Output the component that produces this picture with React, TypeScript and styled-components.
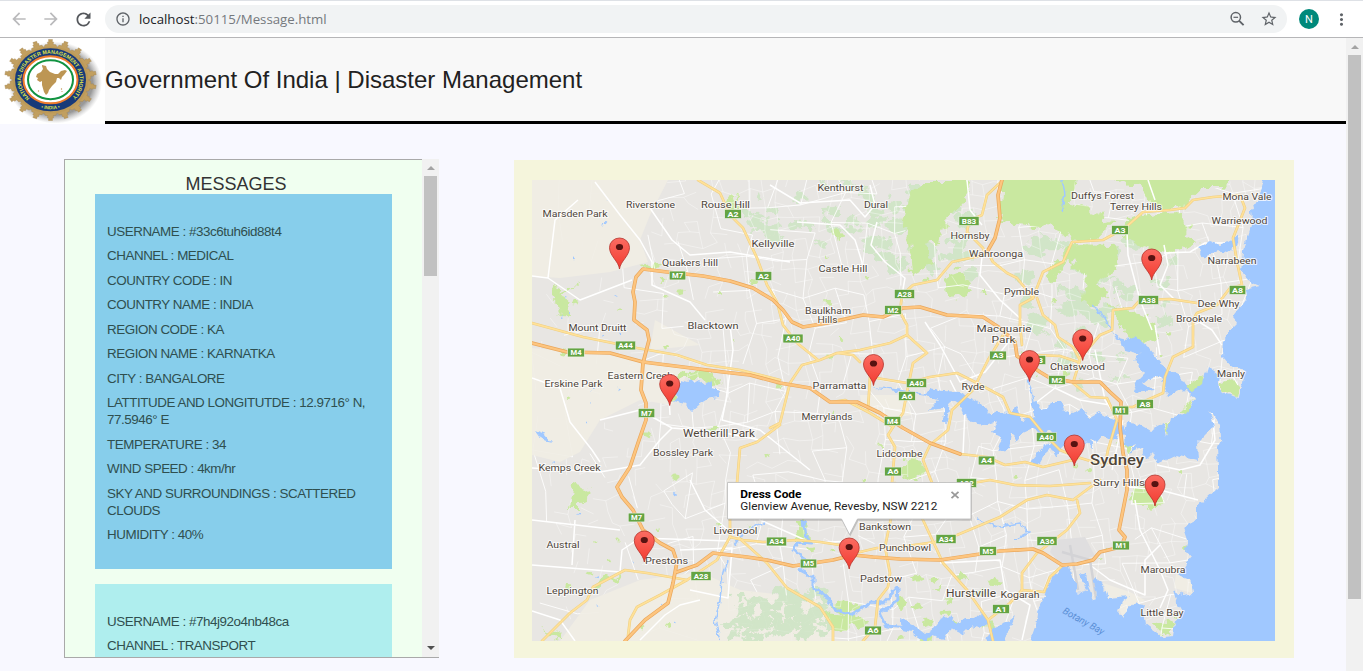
import React from "react";
import styled, { createGlobalStyle } from "styled-components";
import {
  MdArrowBack,
  MdArrowForward,
  MdRefresh,
  MdInfoOutline,
  MdStarBorder,
  MdMoreVert,
} from "react-icons/md";

const GlobalStyle = createGlobalStyle`
  *, *::before, *::after { box-sizing: border-box; }
  html, body { margin: 0; padding: 0; }
  body {
    background: #f8f8ff;
    font-family: "Liberation Sans", Arial, sans-serif;
    color: #222;
    overflow: hidden;
  }
`;

const Window = styled.div`
  display: flex;
  flex-direction: column;
  width: 1363px;
  height: 671px;
  overflow: hidden;
`;

/* ---------- Browser toolbar ---------- */

const Toolbar = styled.div`
  display: flex;
  align-items: center;
  flex: none;
  height: 38px;
  background: #fff;
  border-top: 1px solid #dee1e6;
  border-bottom: 1px solid #b6b6b8;
`;

const NavButton = styled.span<{ $muted?: boolean }>`
  display: flex;
  align-items: center;
  justify-content: center;
  width: 32px;
  height: 28px;
  color: ${(p) => (p.$muted ? "#bababc" : "#55585c")};
`;

const NavGroup = styled.div`
  display: flex;
  padding-left: 3px;
  width: 105px;
`;

const AddressBar = styled.div`
  display: flex;
  align-items: center;
  width: 1182px;
  height: 28px;
  padding: 0 9px 0 10px;
  border-radius: 14px;
  background: #f1f3f4;
  color: #5f6368;
`;

const Url = styled.span`
  flex: 1;
  margin-left: 8px;
  font-family: "Open Sans", "Noto Sans", sans-serif;
  font-size: 13.25px;
  color: #75797e;
  b {
    font-weight: 400;
    color: #202124;
  }
`;

const AddressAction = styled.span`
  display: flex;
  margin-left: 14px;
`;

const Avatar = styled.span`
  display: flex;
  align-items: center;
  justify-content: center;
  width: 20px;
  height: 20px;
  margin: 0 13px 0 12px;
  border-radius: 50%;
  background: #00897b;
  color: #fff;
  font: 11px Roboto, sans-serif;
`;

const ZoomOutIcon = () => (
  <svg width="18" height="18" viewBox="0 0 18 18" fill="none" stroke="currentColor">
    <circle cx="7.8" cy="7.3" r="4.7" strokeWidth="1.5" />
    <path d="M11.2,10.8 L15.6,15.2" strokeWidth="1.9" />
    <path d="M5.5,7.3 H10.1" strokeWidth="1.2" />
  </svg>
);

/* ---------- Page ---------- */

const Viewport = styled.div`
  display: flex;
  flex: 1;
  min-height: 0;
`;

const Page = styled.div`
  display: flex;
  flex-direction: column;
  width: 1346px;
`;

const Scrollbar = styled.div<{ $thumb: number }>`
  display: flex;
  flex-direction: column;
  align-items: center;
  flex: none;
  width: 17px;
  background: #f1f1f1;
  &::after {
    content: "";
    order: 1;
    width: 13px;
    height: ${(p) => p.$thumb}px;
    background: #c1c1c1;
  }
`;

const ArrowUp = styled.span`
  height: 17px;
  padding-top: 7px;
  &::before {
    content: "";
    display: block;
    border: 4px solid transparent;
    border-top: 0;
    border-bottom-color: #a3a3a3;
  }
`;

const ArrowDown = styled.span`
  order: 2;
  height: 17px;
  margin-top: auto;
  padding-top: 6px;
  &::before {
    content: "";
    display: block;
    border: 4px solid transparent;
    border-bottom: 0;
    border-top-color: #505050;
  }
`;

const Header = styled.header`
  display: flex;
  flex: none;
  height: 86px;
`;

const LogoBox = styled.div`
  width: 105px;
  background: #fff;
`;

const Banner = styled.div`
  display: flex;
  align-items: center;
  flex: 1;
  background: #f8f8f8;
  border-bottom: 3px solid #000;
`;

const Title = styled.h1`
  margin: 0;
  font-size: 24px;
  font-weight: 400;
  color: #212121;
`;

const Main = styled.main`
  display: flex;
  align-items: flex-start;
  gap: 75px;
  padding: 35px 0 0 64px;
`;

const MessagePanel = styled.section`
  display: flex;
  width: 375px;
  height: 499px;
  border-bottom: 1px solid #a9a9a9;
`;

const MessageList = styled.div`
  display: flex;
  flex-direction: column;
  flex: 1;
  gap: 15px;
  padding: 0 30px;
  overflow: hidden;
  background: #f0fff0;
  border: 1px solid #a9a9a9;
  border-right: 0;
  border-bottom: 0;
`;

const PanelTitle = styled.h2`
  flex: none;
  height: 34px;
  margin: 0 15px -15px 0;
  padding-top: 13px;
  font-size: 18px;
  line-height: 22px;
  font-weight: 400;
  text-align: center;
  color: #333;
`;

const MessageCard = styled.article<{ $tone: string }>`
  flex: none;
  width: 297px;
  height: 375px;
  padding: 28.8px 12px 0;
  background: ${(p) => p.$tone};
`;

const Field = styled.p`
  margin: 0 0 7.4px;
  font-size: 13.4px;
  line-height: 17.1px;
  letter-spacing: -0.45px;
  color: #2f4f4f;
`;

const MapFrame = styled.section`
  width: 780px;
  height: 498px;
  margin-top: 1px;
  padding: 20px 19px 17px 18px;
  background: #f5f5dc;
  svg {
    display: block;
  }
`;

/* ---------- Emblem ---------- */

const teeth = Array.from({ length: 18 }, (_, i) => i * 20);

const Emblem = () => (
  <svg width="105" height="86" viewBox="0 0 105 86">
    <defs>
      <radialGradient id="shade">
        <stop offset="0.8" stopColor="#777" stopOpacity="0.75" />
        <stop offset="1" stopColor="#999" stopOpacity="0" />
      </radialGradient>
      <path id="arcTop" d="M29.8,60.2 A29.3,26 0 1 1 69.5,61.5" />
      <path id="arcLow" d="M32,66.5 A34,30 0 0 0 69,66.5" />
    </defs>
    <ellipse cx="55" cy="44.5" rx="47" ry="41" fill="url(#shade)" />
    <g transform="translate(50.5 42) scale(1 .88)">
      {teeth.map((a) => (
        <path
          key={a}
          transform={`rotate(${a})`}
          fill="#c19f60"
          stroke="#a08350"
          strokeWidth=".4"
          d="M-7.5,-34 L-5.5,-40 L-2.6,-40.5 L-3.2,-43 L-1.8,-43.5 L-2,-46 L2,-46 L1.8,-43.5 L3.2,-43 L2.6,-40.5 L5.5,-40 L7.5,-34Z"
        />
      ))}
      <circle r="38" fill="#bd9a58" />
    </g>
    <ellipse cx="50.5" cy="41.8" rx="35.5" ry="31.5" fill="#173a79" />
    <ellipse cx="50.5" cy="41.8" rx="27" ry="23.5" fill="#fff" stroke="#ef7c2c" strokeWidth="2" />
    <ellipse cx="50.5" cy="41.8" rx="22.5" ry="19.5" fill="#fff" stroke="#119341" strokeWidth="2" />
    <path
      d="M42,27 l4,1 1,3 3,3 5,2 3,0 3,-3 4,-1 2,1 -3,4 -2,2 -1,3 -2,-2 -2,0 -1,4 -4,4 -3,4 -1,3 -2,2 -2,-3 -2,-7 0,-4 -2,1 -3,-2 1,-2 -2,-1 1,-3 4,-2 2,-3 -1,-3z"
      fill="#bd9654"
    />
    <g fill="#bd9654">
      <circle cx="38.5" cy="53" r=".7" />
      <circle cx="61.5" cy="51" r=".7" />
      <circle cx="62" cy="53.5" r=".6" />
    </g>
    <g fontFamily="Liberation Sans, Arial, sans-serif" fontWeight="700" fill="#dfe04a">
      <text fontSize="5.4">
        <textPath href="#arcTop" textLength="127" lengthAdjust="spacingAndGlyphs">
          NATIONAL DISASTER MANAGEMENT AUTHORITY
        </textPath>
      </text>
      <text fontSize="4.8">
        <textPath href="#arcLow" startOffset="50%" textAnchor="middle">
          • INDIA •
        </textPath>
      </text>
    </g>
  </svg>
);

/* ---------- Map ---------- */

const WATER = "#a0c8ff";
const PARK = "#c9e8a0";
const WOOD = "#d1e5c8";
const RURAL = "#f0ede4";
const LAND = "#e8e6e3";

let seed = 11;
const rand = () => {
  seed = (seed * 16807) % 2147483647;
  return seed / 2147483647;
};

const buildStreets = (step: number, keep: number) => {
  const cols = Math.ceil(743 / step) + 2;
  const rows = Math.ceil(461 / step) + 2;
  const pts: number[][][] = [];
  for (let r = 0; r < rows; r++) {
    pts.push([]);
    for (let c = 0; c < cols; c++) {
      const x = 526 + c * step + (rand() - 0.5) * step * 0.6 + r * 1.2;
      const y = 174 + r * step + (rand() - 0.5) * step * 0.6 - c * 0.5;
      pts[r].push([x, y]);
    }
  }
  let d = "";
  for (let r = 0; r < rows; r++) {
    for (let c = 0; c < cols; c++) {
      const [x, y] = pts[r][c];
      const k = x < 650 ? keep * 0.4 : keep;
      if (c + 1 < cols && rand() < k) {
        const [a, b] = pts[r][c + 1];
        d += `M${x.toFixed(1)},${y.toFixed(1)}L${a.toFixed(1)},${b.toFixed(1)}`;
      }
      if (r + 1 < rows && rand() < k) {
        const [a, b] = pts[r + 1][c];
        d += `M${x.toFixed(1)},${y.toFixed(1)}L${a.toFixed(1)},${b.toFixed(1)}`;
      }
    }
  }
  return d;
};

const sideStreets = buildStreets(13, 0.5);
const mainStreets = buildStreets(31, 0.62);

const blob = (cx: number, cy: number, size: number) => {
  const n = 9;
  let s = "";
  for (let i = 0; i < n; i++) {
    const t = (i / n) * Math.PI * 2;
    const q = size * (0.45 + rand() * 0.8);
    s += `${(cx + Math.cos(t) * q).toFixed(1)},${(cy + Math.sin(t) * q * 0.75).toFixed(1)} `;
  }
  return s;
};

const scatter = (n: number, x0: number, y0: number, x1: number, y1: number, lo: number, hi: number) =>
  Array.from({ length: n }, () =>
    blob(x0 + rand() * (x1 - x0), y0 + rand() * (y1 - y0), lo + rand() * (hi - lo))
  );

const woods = [
  ...scatter(34, 745, 180, 920, 245, 4, 11),
  ...scatter(30, 880, 185, 970, 290, 5, 13),
  ...scatter(30, 1020, 235, 1180, 330, 6, 14),
  ...scatter(80, 730, 590, 826, 640, 4, 10),
  ...scatter(14, 1060, 330, 1130, 400, 3, 8),
];
const cityParks = [
  ...scatter(46, 650, 250, 1200, 560, 1.5, 4.5),
  ...scatter(16, 560, 270, 700, 640, 2, 4),
  ...scatter(18, 860, 570, 1000, 640, 3, 7),
];
const ponds = scatter(22, 540, 190, 680, 640, 0.8, 1.8);

const rural = [
  "532,180 668,180 650,215 640,240 648,262 610,272 560,278 532,276",
  "532,348 600,354 690,368 672,405 640,400 600,420 580,452 560,462 532,455",
  "590,600 640,580 700,572 740,590 825,600 835,641 560,641",
  "655,320 700,345 650,350",
  "860,395 905,395 912,415 890,418 862,408",
  "1176,574 1193,580 1192,593 1174,588",
  "1103,583 1130,592 1145,600 1122,616 1118,606 1126,597 1108,598",
];

const parks = [
  "920,180 967,180 972,192 963,202 945,222 940,242 922,245 930,256 933,265 912,276 910,242 902,222 908,200",
  "1003,176 1076,176 1070,203 1098,213 1114,224 1098,237 1074,240 1058,230 1035,226 1000,222",
  "1100,176 1236,176 1224,188 1204,188 1186,205 1160,210 1148,198 1140,187",
  "1130,217 1160,214 1183,213 1187,235 1200,243 1173,252 1137,245 1124,235",
  "1073,244 1112,245 1115,268 1097,282 1110,298 1082,305 1087,275 1065,260 1052,285 1048,275 1060,255",
  "1110,305 1142,315 1155,322 1157,338 1140,345 1126,335",
  "549,285 563,288 573,318 561,317",
  "572,483 585,487 593,493 580,503 580,510 568,510",
  "594,583 622,573 618,580 600,587",
  "551,302 576,284 570,292 556,304",
  "902,460 920,455 925,475 912,480 902,475",
  "944,278 960,272 970,285 962,300 948,296",
  "796,520 806,520 808,540 798,540",
  "833,606 850,600 862,604 852,613 838,614",
  "822,613 858,616 870,622 845,630 828,625",
  "1128,492 1150,480 1163,500 1150,508 1130,502",
  "1152,625 1175,620 1173,636 1156,632",
  "726,200 738,198 738,210 728,212",
  "672,386 680,374 700,372 720,378 716,386 700,378 686,378",
  "640,265 655,262 662,268 648,270",
  "830,230 838,228 842,238 834,240",
  "555,637 542,628 556,632 562,641",
];

const coast =
  "M1264,170 L1264,180 1260,195 1257,202 1251,210 1252,222 1247,238 1244,252 1242,272 1248,280 1260,285 1246,288 1247,298 1240,308 1233,317 1238,323 1231,330 1223,340 1222,357 1230,366 1245,371 1243,382 1239,397 1226,394 1218,388 1220,376 1207,367 1204,378 1190,388 1186,382 1176,377 1168,370 1166,382 1172,392 1187,390 1195,400 1183,415 1170,418 1166,437 1163,423 1150,430 1140,424 1127,423 1124,437 1125,447 1136,444 1130,453 1143,447 1145,460 1153,452 1157,464 1177,455 1198,460 1197,443 1207,433 1214,427 1210,410 1220,425 1221,437 1217,447 1218,470 1218,488 1205,500 1198,505 1198,520 1183,528 1187,540 1186,552 1191,558 1185,568 1177,575 1190,580 1193,593 1183,595 1173,590 1177,603 1183,613 1175,623 1173,636 1163,637 1153,630 1145,624 1143,613 1145,603 1135,602 1122,617 1118,612 1122,602 1130,596 1108,598 1103,583 1093,577 1098,600 1093,601 1085,572 1080,574 1087,590 1084,594 1077,592 1070,567 1062,567 1050,580 1045,593 1037,613 1035,627 1027,650 H1290 V170Z";

const inlets = [
  "870,387 890,388 926,394 930,388 943,391 960,392 970,398 982,404 990,416 997,412 1010,413 1016,408 1023,420 1036,416 1030,404 1036,402 1042,410 1048,408 1050,402 1060,402 1064,410 1070,414 1082,408 1090,418 1100,412 1110,418 1122,424 1128,436 1120,434 1110,440 1104,434 1096,443 1090,438 1092,449 1084,440 1076,450 1070,443 1062,448 1056,457 1050,446 1040,464 1030,462 1044,446 1056,440 1050,430 1040,436 1034,428 1023,433 1017,440 1010,433 1008,450 997,451 1002,437 992,432 998,421 985,425 973,423 967,418 962,407 950,400 947,423 942,420 944,408 930,410 938,400 926,396 890,390",
  "1112,332 1120,338 1128,340 1135,336 1147,345 1157,358 1164,368 1178,374 1186,388 1168,396 1160,376 1150,378 1143,384 1153,390 1132,392 1138,380 1144,374 1134,360 1140,354 1124,350 1122,344",
  "673,390 690,378 695,383 700,380 705,384 712,380 711,388 720,390 718,398 707,400 699,405 692,411 686,405 673,402 678,396",
  "1198,247 1210,242 1220,246 1238,236 1236,246 1228,252 1217,250 1203,259",
  "900,618 912,624 925,634 934,628 940,620 950,616 956,624 964,618 975,618 982,612 990,622 980,628 970,626 962,634 950,628 944,640 932,636 924,642 912,632 902,630",
  "984,645 992,628 1008,622 1015,616 1008,633 1002,645",
  "535,430 545,434 552,442 542,440",
];

const rivers = [
  "M803,520 L806,536 813,543 797,542 794,550 806,560 800,570 813,577 813,587 827,597 833,608 850,615 863,608 870,602 883,603 897,588 898,600 880,614 886,626 910,628",
  "M728,560 L722,580 720,600 715,620 720,640",
  "M735,545 L745,530 765,522",
  "M1092,305 L1105,318 1112,332",
  "M1062,180 L1065,195 1060,212",
  "M1027,373 L1032,395 1034,412",
  "M978,520 L1000,527 1020,523 1028,533 1015,540",
];

const arterials = [
  "M595,182 L620,215 640,240 652,262 652,285 690,302 705,320",
  "M650,208 L672,240 690,255 730,252 790,262",
  "M532,276 L548,278 580,300 632,280 M548,278 L555,220 578,200",
  "M770,185 L800,203 850,200 865,217 875,205 870,185 M877,222 L871,245 885,262 905,278 902,295",
  "M797,222 L840,225 855,240 862,262 862,270",
  "M967,180 L970,210 982,225 M983,248 L980,275 1000,300 1022,320",
  "M1127,232 L1128,255 1140,300 1152,330",
  "M1148,180 L1155,200 M1164,245 L1168,265 1160,285 1175,300",
  "M1233,243 L1205,243 1190,252 1164,253",
  "M532,378 L560,388 570,422 592,450 600,462 M532,468 L600,472 640,465 660,440 672,428",
  "M600,420 L640,410 672,428 720,432 760,440 M668,380 L670,415",
  "M730,325 L733,350 726,400 722,420 760,430 810,470",
  "M532,565 L620,572 M620,572 L622,550 640,538 730,541",
  "M690,480 L705,510 728,530 M737,483 L760,520 812,543 850,541",
  "M1010,340 L985,372 960,382 940,345 925,322",
  "M963,454 L965,410 950,380",
  "M1095,350 L1105,400 1118,420 M1033,405 L1055,388 1080,400 1110,405",
  "M1135,500 L1140,530 1160,570 1168,590 1160,608",
  "M1157,465 L1180,470 1200,465 1215,440 1213,420",
  "M1090,565 L1110,580 1145,595 1145,560 1160,545",
  "M1196,320 L1212,330 1222,345 M1155,325 L1160,355",
  "M940,563 L1000,560 1005,590 1030,605 1022,640",
  "M680,550 L732,548 728,598 690,590 M640,640 L665,615 680,605 700,600",
  "M1128,487 L1160,490 1198,500",
  "M532,611 L560,620 575,641 M575,520 L572,565 M532,520 L620,530",
];

const yellowRoads = [
  "M1001,182 L987,195 982,215 969,221 967,232 983,248 985,255 970,258 952,262 937,280 913,285 902,295 900,312 907,325 907,335 927,353 913,363 908,387 903,413 893,427 888,435 895,447 892,483",
  "M988,253 L993,262 1007,273 1017,278 1033,298 1020,305 1020,330",
  "M1033,298 L1043,272 1063,262 1072,242 1103,240 1125,228 1143,212 1170,210 1185,208 1193,200 1213,197 1240,195 1245,208 1233,238 1237,262 1242,285 1230,288 1217,305 1197,313 1193,320 1193,347 1173,357 1165,377 1163,393 1147,400 1133,407 1122,407",
  "M1037,298 L1043,315 1055,325 1058,337 1073,347 1080,360 1073,383 1090,397 1107,398 1117,420 1108,450 1105,465",
  "M1112,330 L1113,310 1133,308 1140,300 1170,299 1197,303 M1080,358 L1100,335 1112,330",
  "M698,180 L720,193 730,215 743,228 757,258 767,285 777,302 783,325 797,343 818,360",
  "M532,323 L583,337 637,348 677,355 707,365 740,370 780,380",
  "M770,428 L780,423 790,383 802,365 820,360 837,353 853,355 860,362 M837,353 L860,350 890,343 907,335",
  "M868,410 L870,377 907,383 930,377 957,373 977,383 1003,397 1010,413 1030,417 1043,433 1060,450 1077,457 1097,463 1125,462",
  "M1003,335 L988,360 973,390 952,410 948,430 930,445 923,460 932,483",
  "M960,454 L987,457 1005,465 1025,462 1043,467 1077,459",
  "M832,402 L845,400 870,413 893,427",
  "M730,500 L730,537 717,560 687,580 660,595 637,607 630,620 628,636",
  "M730,537 L743,540 763,542 797,540 820,542 840,545 860,552 877,548 900,547 935,542 957,535 1000,517 1027,500 1047,495 1073,500 1100,480",
  "M738,537 L767,563 787,588 820,607 833,627 833,641",
  "M542,641 L570,613 587,600 593,587 625,570 647,573 687,580",
  "M895,483 L892,513 885,547 890,573 888,587 878,600 875,627 863,641",
  "M905,485 L923,520 937,550 943,563 967,590 988,620 993,641 M988,620 L1010,603 1022,590 1022,573 1037,553 1067,530 1080,513 1077,500",
  "M1022,590 L1044,592 1050,577 1062,566",
  "M780,425 L757,442 740,448 737,483",
  "M950,487 L990,480 1015,485 1050,486 1090,483",
  "M1020,325 L1022,345 M1035,355 L1060,356 1078,362",
];

const motorways = [
  "M625,641 L645,620 668,603 673,583 677,562 673,550 660,543 643,530 633,510 622,497 617,487 630,467 638,443 646,420 646,403 641,390 643,363 649,340 647,330 634,320 635,302 633,292 636,277 643,269 667,272 703,276 730,281 753,288 773,300 783,310 792,322 803,327 827,323 863,315 883,317 903,308 920,307 947,315 983,317 1000,328 1015,342 1017,356 1040,372 1050,378 1073,382 1100,382 1110,392 1121,402 1120,427 1123,453 1127,470 1127,490 1123,510 1119,530 1125,537 1121,547 1100,552 1093,560 1077,564 1062,565 1043,553 1033,549 1000,551 967,556 940,560 900,559 873,557 853,555 833,560 793,566 767,560 747,557 713,553 697,565 677,572",
  "M532,343 L567,352 610,353 643,362 683,367 723,372 750,375 780,383 810,388 830,402 857,402 880,413 903,428 930,443 960,454",
  "M1002,180 L998,195 1000,218 995,238 987,252",
];

type Spot = [string, number, number, number, number?];

const places: Spot[] = [
  ["Marsden Park", 575, 213.5, 65],
  ["Riverstone", 650.5, 204, 49],
  ["Rouse Hill", 725.5, 204, 49],
  ["Kellyville", 773, 243, 43],
  ["Quakers Hill", 690, 262, 56],
  ["Kenthurst", 840.5, 187, 46],
  ["Dural", 876, 204, 24],
  ["Castle Hill", 843, 268.5, 49],
  ["Hornsby", 970, 235.5, 39],
  ["Wahroonga", 996, 253.5, 54],
  ["Pymble", 1021.5, 291, 35],
  ["Baulkham", 828, 310, 46],
  ["Hills", 827.5, 319.3, 20],
  ["Duffys Forest", 1102.5, 195, 63],
  ["Terrey Hills", 1136, 206, 52],
  ["Mona Vale", 1247, 196, 49],
  ["Warriewood", 1239.5, 220.5, 56],
  ["Narrabeen", 1232, 260.5, 49],
  ["Dee Why", 1218.5, 303, 42],
  ["Brookvale", 1199, 318, 46],
  ["Mount Druitt", 597.5, 327, 58],
  ["Blacktown", 713, 325.5, 51],
  ["Eastern Creek", 640, 375, 65],
  ["Erskine Park", 573.5, 383, 58],
  ["Wetherill Park", 719, 433, 72, 10.6],
  ["Bossley Park", 683, 452, 60],
  ["Kemps Creek", 569.5, 467, 62],
  ["Merrylands", 827, 416.5, 51],
  ["Parramatta", 839.5, 385.5, 54],
  ["Ryde", 973, 386, 23],
  ["Macquarie", 1004, 328.7, 55, 9.9],
  ["Park", 1003.5, 339.2, 24, 9.9],
  ["Lidcombe", 899.5, 453.5, 46],
  ["Chatswood", 1077.5, 366, 55],
  ["Manly", 1231, 373, 28],
  ["Sydney", 1117, 459.2, 54, 14],
  ["Surry Hills", 1119, 482.5, 52],
  ["Liverpool", 735.5, 530, 44],
  ["Austral", 563, 544, 33],
  ["Prestons", 666.5, 560, 43],
  ["Leppington", 572.5, 590.5, 52],
  ["Bankstown", 885, 526.5, 52],
  ["Punchbowl", 905, 547, 52],
  ["Padstow", 881, 578, 42],
  ["Hurstville", 971, 593, 50, 10.4],
  ["Kogarah", 1020, 594, 39],
  ["Maroubra", 1163, 569.5, 45],
  ["Little Bay", 1162, 612, 43],
];

const shields: [string, number, number][] = [
  ["A2", 733, 214], ["M7", 677.5, 275.5], ["A2", 763.5, 276], ["A44", 625.5, 345.5],
  ["M4", 576, 352.5], ["M7", 646.5, 413], ["M7", 636.5, 517.5], ["A34", 776.5, 541.5],
  ["A28", 701, 576], ["M5", 808.5, 563.5], ["A6", 873, 630.5], ["A40", 793, 338.5],
  ["A28", 904.5, 294], ["M2", 893, 310], ["B83", 969, 221], ["A3", 1120, 230],
  ["A38", 1148.5, 300], ["A8", 1237.5, 290], ["A3", 998, 355.5], ["A40", 916.5, 383],
  ["A6", 907, 396], ["M4", 892.5, 421], ["A4", 986.5, 460.5], ["A6", 893, 471.5],
  ["A22", 966.5, 483], ["A40", 1046.5, 437], ["M2", 1057, 380], ["M1", 1120.5, 410.5],
  ["A8", 1145, 404], ["A3", 1037.5, 360], ["M5", 988, 551], ["A34", 946, 539],
  ["A36", 1047, 541], ["M1", 1121, 545.5], ["A1", 1001, 609],
];

const pins: [number, number][] = [
  [619.5, 269], [1151.7, 280], [669.7, 405.5], [873.5, 385.5], [1029.5, 381.5],
  [1082.7, 360.5], [1074.3, 466], [1155, 506], [644.3, 562], [849.2, 569],
];

const CityMap = () => (
  <svg width="743" height="461" viewBox="532 180 743 461" fontFamily="Roboto, sans-serif">
    <defs>
      <linearGradient id="pinFill" x1="0" y1="0" x2="0" y2="1">
        <stop offset="0" stopColor="#fb6c62" />
        <stop offset="1" stopColor="#f23b30" />
      </linearGradient>
      <filter id="ragged" filterUnits="userSpaceOnUse" x="512" y="160" width="783" height="501">
        <feTurbulence type="fractalNoise" baseFrequency="0.09" numOctaves="3" seed="4" result="n" />
        <feDisplacementMap in="SourceGraphic" in2="n" scale="16" xChannelSelector="R" yChannelSelector="G" />
      </filter>
      <filter id="shore" filterUnits="userSpaceOnUse" x="512" y="160" width="783" height="501">
        <feTurbulence type="fractalNoise" baseFrequency="0.15" numOctaves="2" seed="9" result="n" />
        <feDisplacementMap in="SourceGraphic" in2="n" scale="7" xChannelSelector="R" yChannelSelector="G" />
      </filter>
      <mask id="urban">
        <rect x="532" y="180" width="743" height="461" fill="#fff" />
        {parks.slice(0, 6).map((p) => <polygon key={p} points={p} fill="#000" />)}
        {rural.slice(0, 3).map((p) => <polygon key={p} points={p} fill="#222" />)}
      </mask>
    </defs>
    <rect x="532" y="180" width="743" height="461" fill={LAND} />
    {rural.map((p) => <polygon key={p} points={p} fill={RURAL} />)}
    <g filter="url(#ragged)">
      {woods.map((p) => <polygon key={p} points={p} fill={WOOD} />)}
      {parks.map((p) => <polygon key={p} points={p} fill={PARK} />)}
    </g>
    <g fill="none" stroke="#fff" strokeLinejoin="round">
      <g mask="url(#urban)">
        <path d={sideStreets} strokeWidth=".6" opacity=".65" />
        <path d={mainStreets} strokeWidth="1" opacity=".85" />
      </g>
      {arterials.map((d) => <path key={d} d={d} strokeWidth="1.5" />)}
    </g>
    <g filter="url(#shore)">
      {cityParks.map((p) => <polygon key={p} points={p} fill={PARK} />)}
    </g>
    <path d="M1055,540 L1085,537 1095,556 1062,566 1050,552Z" fill="#dfdedf" />
    <path d="M1070,545 L1078,590 M1062,552 L1090,560 L1096,598" fill="none" stroke="#d3d3d6" strokeWidth="2.5" />
    <g filter="url(#shore)">
      <path d={coast} fill={WATER} />
      {inlets.map((p) => <polygon key={p} points={p} fill={WATER} />)}
      {ponds.map((p) => <polygon key={p} points={p} fill={WATER} />)}
      {rivers.map((d, i) => (
        <path key={d} d={d} fill="none" stroke={WATER} strokeWidth={i === 0 ? 3 : 1.5} strokeLinejoin="round" />
      ))}
      <path d="M1220,385 l12,-6 8,8 -2,9 -18,-6z M1186,387 l18,-12 -2,8 -10,8z M1164,422 l5,0 -2,14z M1180,412 l14,-14 -8,16z M1125,446 l8,-1 -5,9z" fill={PARK} />
    </g>
    <path d="M1230,372 L1238,385 M1112,470 L1123,420" stroke="#fff" strokeWidth="1.2" fill="none" />
    <g fill="none" strokeLinejoin="round" strokeLinecap="round">
      {yellowRoads.map((d) => <path key={d} d={d} stroke="#efcf80" strokeWidth="2.7" />)}
      {yellowRoads.map((d) => <path key={d} d={d} stroke="#ffe199" strokeWidth="1.7" />)}
      {motorways.map((d) => <path key={d} d={d} stroke="#e9a75c" strokeWidth="3.7" />)}
      {motorways.map((d) => <path key={d} d={d} stroke="#fdc57f" strokeWidth="2.3" />)}
    </g>
    {shields.map(([name, x, y]) => {
      const w = name.length > 2 ? 20 : 16.5;
      return (
        <g key={`${name}-${x}`}>
          <rect x={x - w / 2} y={y - 4.4} width={w} height="8.8" fill="#64a443" stroke="#f3f6ee" strokeWidth=".5" />
          <text
            x={x}
            y={y + 2.7}
            fontSize="7.4"
            fontWeight="700"
            fill="#fff"
            textAnchor="middle"
            textLength={w - 5.5}
            lengthAdjust="spacingAndGlyphs"
          >
            {name}
          </text>
        </g>
      );
    })}
    {places.map(([name, x, y, w, size = 9.6]) => (
      <text
        key={name}
        x={x}
        y={y + size * 0.38}
        fontSize={size}
        fontWeight={size > 12 ? 500 : 400}
        fill="#4f463b"
        stroke="#fff"
        strokeWidth="2"
        strokeOpacity=".75"
        paintOrder="stroke"
        strokeLinejoin="round"
        textAnchor="middle"
        textLength={w}
        lengthAdjust="spacingAndGlyphs"
      >
        {name}
      </text>
    ))}
    <text
      transform="translate(1082 624) rotate(29)"
      fontSize="9.6"
      fontStyle="italic"
      fill="#5b8fd6"
      textAnchor="middle"
      textLength="46"
      lengthAdjust="spacingAndGlyphs"
    >
      Botany Bay
    </text>
    {pins.map(([x, y]) => (
      <g key={x} transform={`translate(${x} ${y})`}>
        <path
          d="M0,0 C-1,-8 -10,-13 -10,-21.5 A10,9.5 0 0 1 10,-21.5 C10,-13 1,-8 0,0Z"
          fill="url(#pinFill)"
          stroke="#b5322b"
          strokeWidth=".8"
        />
        <ellipse cy="-22" rx="3.6" ry="3.1" fill="#571311" />
      </g>
    ))}
    <path
      d="M727.5,483 H971 V519.5 H857.5 L849.5,535 841.5,519.5 H727.5Z"
      fill="#777"
      opacity=".35"
      transform="translate(.8 1.2)"
    />
    <path d="M727.5,482.5 H971 V519 H857.5 L849.5,534.5 841.5,519 H727.5Z" fill="#fff" stroke="#b9b9b9" strokeWidth=".8" />
    <text x="740.3" y="498.4" fontSize="10" fontWeight="700" fill="#000" textLength="61.2" lengthAdjust="spacingAndGlyphs">
      Dress Code
    </text>
    <text x="740.3" y="510.2" fontSize="10" fill="#222" textLength="197" lengthAdjust="spacingAndGlyphs">
      Glenview Avenue, Revesby, NSW 2212
    </text>
    <path d="M951.5,491.8 L958.5,498.2 M958.5,491.8 L951.5,498.2" stroke="#999" strokeWidth="1.8" />
  </svg>
);

/* ---------- Content ---------- */

const messages = [
  {
    tone: "#87ceeb",
    fields: [
      "USERNAME : #33c6tuh6id88t4",
      "CHANNEL : MEDICAL",
      "COUNTRY CODE : IN",
      "COUNTRY NAME : INDIA",
      "REGION CODE : KA",
      "REGION NAME : KARNATKA",
      "CITY : BANGALORE",
      "LATTITUDE AND LONGITUTDE : 12.9716° N, 77.5946° E",
      "TEMPERATURE : 34",
      "WIND SPEED : 4km/hr",
      "SKY AND SURROUNDINGS : SCATTERED CLOUDS",
      "HUMIDITY : 40%",
    ],
  },
  {
    tone: "#afeeee",
    fields: ["USERNAME : #7h4j92o4nb48ca", "CHANNEL : TRANSPORT"],
  },
];

export default function App() {
  return (
    <>
      <GlobalStyle />
      <Window>
        <Toolbar>
          <NavGroup>
            <NavButton $muted><MdArrowBack size={20} /></NavButton>
            <NavButton $muted><MdArrowForward size={20} /></NavButton>
            <NavButton><MdRefresh size={21} /></NavButton>
          </NavGroup>
          <AddressBar>
            <MdInfoOutline size={16} />
            <Url><b>localhost</b>:50115/Message.html</Url>
            <AddressAction><ZoomOutIcon /></AddressAction>
            <AddressAction><MdStarBorder size={18} /></AddressAction>
          </AddressBar>
          <Avatar>N</Avatar>
          <MdMoreVert size={19} color="#5f6368" />
        </Toolbar>
        <Viewport>
          <Page>
            <Header>
              <LogoBox><Emblem /></LogoBox>
              <Banner><Title>Government Of India | Disaster Management</Title></Banner>
            </Header>
            <Main>
              <MessagePanel>
                <MessageList>
                  <PanelTitle>MESSAGES</PanelTitle>
                  {messages.map((m) => (
                    <MessageCard key={m.tone} $tone={m.tone}>
                      {m.fields.map((f) => <Field key={f}>{f}</Field>)}
                    </MessageCard>
                  ))}
                </MessageList>
                <Scrollbar $thumb={100}><ArrowUp /><ArrowDown /></Scrollbar>
              </MessagePanel>
              <MapFrame><CityMap /></MapFrame>
            </Main>
          </Page>
          <Scrollbar $thumb={544}><ArrowUp /></Scrollbar>
        </Viewport>
      </Window>
    </>
  );
}
